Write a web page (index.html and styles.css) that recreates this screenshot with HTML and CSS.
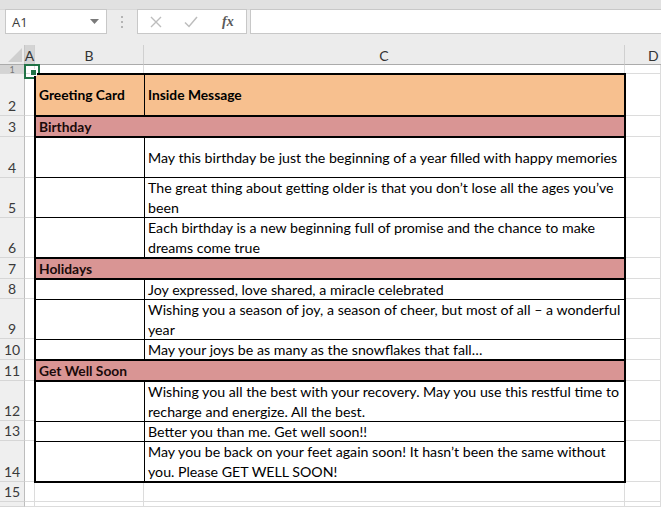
FILE: index.html
```html
<!DOCTYPE html>
<html>
<head>
<meta charset="utf-8">
<link rel="stylesheet" href="styles.css">
</head>
<body>
<div class="top">
  <div class="strip"></div>
  <div class="fbar">
    <div class="namebox"><span>A1</span><svg class="caret" width="9" height="5" viewBox="0 0 9 5"><path d="M0 0H9L4.5 5Z" fill="#7a7a7a"/></svg></div>
    <div class="grip"><i></i><i></i><i></i></div>
    <div class="fbtns">
      <svg class="ic-x" width="12" height="12" viewBox="0 0 12 12"><path d="M1 1L11 11M11 1L1 11" stroke="#bdbdbd" stroke-width="1.4" fill="none"/></svg>
      <svg class="ic-ok" width="14" height="12" viewBox="0 0 14 12"><path d="M1 6.5L5 10.5L13 1" stroke="#bdbdbd" stroke-width="1.5" fill="none"/></svg>
      <span class="fx">fx</span>
    </div>
    <div class="finput"></div>
  </div>
</div>
<div class="sheet">
  <div class="corner"><svg width="14" height="14" viewBox="0 0 14 14"><path d="M14 0V14H0Z" fill="#cfcfcf"/></svg></div>
  <div class="ch sel">A</div>
  <div class="ch">B</div>
  <div class="ch">C</div>
  <div class="ch last">D</div>

  <div class="rh sel r1">1</div><div class="cell a1"></div><div class="cell"></div><div class="cell"></div><div class="cell"></div>
  <div class="rh">2</div><div class="cell"></div><div class="cell"></div>
  <div class="rh">3</div><div class="cell"></div><div class="cell"></div>
  <div class="rh">4</div><div class="cell"></div><div class="cell"></div>
  <div class="rh">5</div><div class="cell"></div><div class="cell"></div>
  <div class="rh">6</div><div class="cell"></div><div class="cell"></div>
  <div class="rh">7</div><div class="cell"></div><div class="cell"></div>
  <div class="rh">8</div><div class="cell"></div><div class="cell"></div>
  <div class="rh">9</div><div class="cell"></div><div class="cell"></div>
  <div class="rh">10</div><div class="cell"></div><div class="cell"></div>
  <div class="rh">11</div><div class="cell"></div><div class="cell"></div>
  <div class="rh">12</div><div class="cell"></div><div class="cell"></div>
  <div class="rh">13</div><div class="cell"></div><div class="cell"></div>
  <div class="rh">14</div><div class="cell"></div><div class="cell"></div>
  <div class="rh">15</div><div class="cell"></div><div class="cell"></div><div class="cell"></div><div class="cell"></div>
  <div class="rh"></div><div class="cell"></div><div class="cell"></div><div class="cell"></div><div class="cell"></div>

  <div class="table">
    <div class="t hdr b">Greeting Card</div><div class="t hdr">Inside Message</div>
    <div class="t cat thick">Birthday</div>
    <div class="t b"></div><div class="t">May this birthday be just the beginning of a year filled with happy memories</div>
    <div class="t b"></div><div class="t">The great thing about getting older is that you don’t lose all the ages you’ve<br>been</div>
    <div class="t b thick"></div><div class="t thick">Each birthday is a new beginning full of promise and the chance to make<br>dreams come true</div>
    <div class="t cat thick">Holidays</div>
    <div class="t b"></div><div class="t">Joy expressed, love shared, a miracle celebrated</div>
    <div class="t b"></div><div class="t">Wishing you a season of joy, a season of cheer, but most of all – a wonderful<br>year</div>
    <div class="t b thick"></div><div class="t thick">May your joys be as many as the snowflakes that fall…</div>
    <div class="t cat thick">Get Well Soon</div>
    <div class="t b"></div><div class="t">Wishing you all the best with your recovery. May you use this restful time to<br>recharge and energize. All the best.</div>
    <div class="t b"></div><div class="t">Better you than me. Get well soon!!</div>
    <div class="t b end"></div><div class="t end">May you be back on your feet again soon! It hasn’t been the same without<br>you. Please GET WELL SOON!</div>
  </div>
</div>
</body>
</html>
```

FILE: styles.css
```css
* { box-sizing: border-box; }
html, body { margin: 0; padding: 0; }
body {
  width: 661px;
  height: 507px;
  overflow: hidden;
  background: #ffffff;
  font-family: Lato, "Open Sans", sans-serif;
}

.top {
  height: 45px;
  background: #ececec;
}
.strip {
  height: 10px;
  background: #e1e1e1;
  border-bottom: 1px solid #d8d8d8;
}
.fbar {
  height: 25px;
  margin-top: -1px;
  display: flex;
  padding-left: 5px;
}
.namebox {
  width: 102px;
  background: #fff;
  border: 1px solid #c8c8c8;
  display: flex;
  align-items: center;
  justify-content: space-between;
  padding: 0 7px 0 6px;
  font-family: "Open Sans", sans-serif;
  font-size: 13px;
  color: #3c3c3c;
}
.grip {
  width: 30px;
  display: flex;
  flex-direction: column;
  align-items: center;
  justify-content: center;
  gap: 3px;
}
.grip i {
  width: 2px;
  height: 2px;
  background: #b4b4b4;
}
.fbtns {
  width: 110px;
  background: #fff;
  border: 1px solid #c8c8c8;
  display: flex;
  align-items: center;
  padding-left: 12px;
}
.ic-ok { margin-left: 22px; }
.fx {
  margin-left: 24px;
  font-family: "Liberation Serif", serif;
  font-style: italic;
  font-weight: bold;
  font-size: 14px;
  color: #5a5a5a;
}
.finput {
  flex: 1;
  margin-left: 3px;
  background: #fff;
  border: 1px solid #c8c8c8;
  border-right: none;
}

.sheet {
  height: 462px;
  display: grid;
  grid-template-columns: 25px 10px 109px 481px 1fr;
  grid-template-rows: 20px 9px 42px 21px 41px 40px 40px 21px 20px 40px 21px 21px 40px 20px 41px 20px 1fr;
  background: #fff;
}
.corner {
  background: #ececec;
  border-right: 1px solid #c6c6c6;
  border-bottom: 1px solid #ababab;
  display: flex;
  align-items: flex-end;
  justify-content: flex-end;
  padding: 0 2px 2px 0;
}
.ch {
  background: #ececec;
  border-right: 1px solid #d0d0d0;
  border-bottom: 1px solid #ababab;
  display: flex;
  align-items: center;
  justify-content: center;
  font-size: 14px;
  color: #333;
  padding-top: 1px;
}
.ch.last { justify-content: flex-start; padding-left: 23px; border-right: none; }
.ch.sel { background: #d4d4d4; }
.rh {
  background: #efefef;
  border-right: 1px solid #bdbdbd;
  border-bottom: 1px solid #d6d6d6;
  display: flex;
  align-items: flex-end;
  justify-content: center;
  font-size: 14px;
  line-height: 18px;
  color: #3a3a3a;
  overflow: hidden;
}
.rh.sel { background: #d4d4d4; }
.rh.r1 { line-height: 7px; font-size: 9px; color: #777; }
.cell {
  border-right: 1px solid #dcdcdc;
  border-bottom: 1px solid #dcdcdc;
}
.cell.a1 { position: relative; }
.cell.a1::after {
  content: "";
  position: absolute;
  left: -1px;
  top: -1px;
  width: 12px;
  height: 11px;
  border: 2px solid #217346;
}
.cell.a1::before {
  content: "";
  position: absolute;
  right: -3px;
  bottom: -3px;
  width: 5px;
  height: 5px;
  background: #217346;
  border: 1px solid #fff;
  z-index: 2;
}

.table {
  grid-column: 3 / 5;
  grid-row: 3 / 16;
  margin: -1px;
  border: 2px solid #000;
  z-index: 1;
  background: #fff;
  display: grid;
  grid-template-columns: 109px 1fr;
  grid-template-rows: 42px 21px 40px 40px 41px 21px 20px 40px 21px 21px 40px 20px 39px;
  font-size: 14.2px;
  color: #000;
}
.t {
  border-bottom: 1px solid #000;
  display: flex;
  align-items: center;
  padding-left: 3px;
  line-height: 20px;
  white-space: nowrap;
}
.t.b { border-right: 1px solid #000; }
.t.thick { border-bottom-width: 2px; }
.t.end { border-bottom: none; }
.hdr {
  background: #f7c08f;
  border-bottom: 2px solid #000;
  font-weight: bold;
  font-size: 13.8px;
}
.cat {
  grid-column: 1 / 3;
  background: #d99594;
  font-weight: bold;
  font-size: 13.8px;
  color: #1a0a0a;
}
```
